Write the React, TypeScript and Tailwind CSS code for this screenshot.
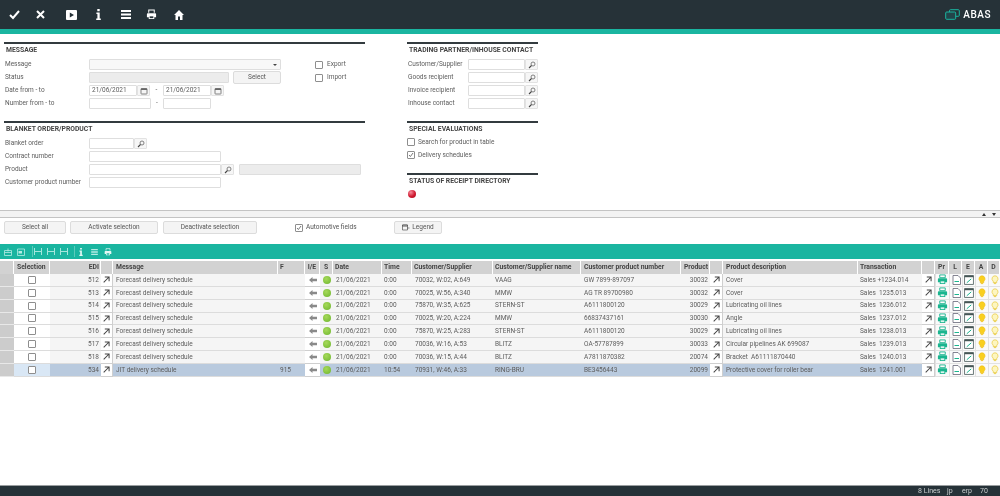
import React from "react";

const rows = [
  ["512", "Forecast delivery schedule", "", "21/06/2021", "0:00", "70032, W:02, A:649", "VAAG", "GW 7899-897097", "30032", "Cover", "Sales +1234.014"],
  ["513", "Forecast delivery schedule", "", "21/06/2021", "0:00", "70025, W:56, A:340", "MMW", "AG TR 89700980", "30032", "Cover", "Sales  1235.013"],
  ["514", "Forecast delivery schedule", "", "21/06/2021", "0:00", "75870, W:35, A:625", "STERN-ST", "A6111800120", "30029", "Lubricating oil lines", "Sales  1236.012"],
  ["515", "Forecast delivery schedule", "", "21/06/2021", "0:00", "70025, W:20, A:224", "MMW", "66837437161", "30030", "Angle", "Sales  1237.012"],
  ["516", "Forecast delivery schedule", "", "21/06/2021", "0:00", "75870, W:25, A:283", "STERN-ST", "A6111800120", "30029", "Lubricating oil lines", "Sales  1238.013"],
  ["517", "Forecast delivery schedule", "", "21/06/2021", "0:00", "70036, W:16, A:53", "BLITZ", "OA-57787899", "30033", "Circular pipelines AK 699087", "Sales  1239.013"],
  ["518", "Forecast delivery schedule", "", "21/06/2021", "0:00", "70036, W:15, A:44", "BLITZ", "A7811870382", "20074", "Bracket  A61111870440", "Sales  1240.013"],
  ["534", "JIT delivery schedule", "915", "21/06/2021", "10:54", "70931, W:46, A:33", "RING-BRU", "BE3456443", "20099", "Protective cover for roller bear", "Sales  1241.001"],
];

const gridCols =
  "grid grid-cols-[14px_36px_51px_12px_165px_27px_15px_13px_49px_30px_81px_88px_100px_29px_13px_135px_64px_13px_14px_13px_13px_13px_12px]";

function Lookup() {
  return (
    <button className="w-[13px] h-[11px] shrink-0 border border-[#e2e2e2] rounded-[1px] bg-[#f6f6f6] flex items-center justify-center">
      <svg width="8" height="8" viewBox="0 0 8 8">
        <circle cx="5" cy="3" r="2" fill="none" stroke="#666" strokeWidth="0.8" />
        <path d="M3.5 4.5 1 7" stroke="#444" strokeWidth="1.1" />
      </svg>
    </button>
  );
}

function Cal() {
  return (
    <button className="w-[13px] h-[11px] shrink-0 border border-[#e2e2e2] rounded-[1px] bg-[#f6f6f6] flex items-center justify-center">
      <svg width="8" height="8" viewBox="0 0 8 8">
        <rect x="1" y="1.5" width="6" height="5.5" rx="0.5" fill="none" stroke="#666" strokeWidth="0.8" />
        <rect x="1" y="1.5" width="6" height="1.5" fill="#666" />
      </svg>
    </button>
  );
}

function Input({ w, value, grey }: { w: string; value?: string; grey?: boolean }) {
  return (
    <div className={`${w} h-[11px] shrink-0 border border-[#dedede] rounded-[1px] ${grey ? "bg-[#ececec]" : "bg-white"} flex items-center pl-[2px] text-[#5c5c5c]`}>
      {value}
    </div>
  );
}

function Check({ on, cls }: { on?: boolean; cls?: string }) {
  return (
    <span className={`w-[8px] h-[8px] shrink-0 border border-[#8e8e8e] rounded-[1px] bg-white flex items-center justify-center ${cls ?? ""}`}>
      {on && (
        <svg width="6" height="6" viewBox="0 0 6 6">
          <path d="M1 3l1.4 1.5L5 1" fill="none" stroke="#555" strokeWidth="0.8" />
        </svg>
      )}
    </span>
  );
}

function Heading({ children }: { children: React.ReactNode }) {
  return (
    <div className="border-t-2 border-[#333b3f] h-[15px] pl-[2px] flex items-center font-bold text-[#444] text-[6.8px] whitespace-nowrap">
      {children}
    </div>
  );
}

function Row({ label, children }: { label: string; children?: React.ReactNode }) {
  return (
    <div className="flex items-center h-[13px]">
      <span className="w-[85px] shrink-0 pl-[1px] whitespace-nowrap">{label}</span>
      {children}
    </div>
  );
}

function Btn({ w, children }: { w: string; children: React.ReactNode }) {
  return (
    <button className={`${w} h-[13px] shrink-0 border border-[#dcdcdc] rounded-[2px] bg-[#f4f4f4] text-[#555] flex items-center justify-center gap-[2px]`}>
      {children}
    </button>
  );
}

function ArrowCell() {
  return (
    <div className="bg-white border-r border-b border-[#cfcfcf] flex items-center justify-center">
      <svg width="9" height="9" viewBox="0 0 8 8">
        <path d="M1.5 6.5 6 2M2.5 1.7H6.3V5.5" fill="none" stroke="#444" strokeWidth="0.9" />
      </svg>
    </div>
  );
}

function IconCell({ children }: { children: React.ReactNode }) {
  return <div className="bg-[#fafafa] border-l border-b border-[#e2e2e2] flex items-center justify-center">{children}</div>;
}

const TopPrinter = ({ fill, size = 11 }: { fill: string; size?: number }) => (
  <svg width={size} height={size} viewBox="0 0 12 12">
    <path d="M3 1h6v3H3z" fill="none" stroke={fill} strokeWidth="1" />
    <path d="M1 5.5a1 1 0 0 1 1-1h8a1 1 0 0 1 1 1V9H9v2H3V9H1z" fill={fill} />
    <path d="M4 8h4v2H4z" fill="#fff" opacity="0.85" />
  </svg>
);

const Bulb = ({ fill, stroke }: { fill: string; stroke: string }) => (
  <svg width="8" height="10" viewBox="0 0 8 10">
    <path d="M4 .8a3 3 0 0 1 1.8 5.4V7.5H2.2V6.2A3 3 0 0 1 4 .8z" fill={fill} stroke={stroke} strokeWidth="0.7" />
    <path d="M2.8 8.6h2.4" stroke={stroke} strokeWidth="0.9" />
  </svg>
);

export default function App() {
  return (
    <div className="w-[1000px] h-[496px] overflow-hidden bg-white flex flex-col text-[6.5px] leading-none font-['Roboto',sans-serif] text-[#5c5c5c] blur-[0.3px]">
      {/* top bar */}
      <header className="h-[29px] shrink-0 bg-[#263238] flex items-center justify-between pl-[9px] pr-[9px]">
        <div className="flex items-center text-white">
          <svg className="mr-[16px]" width="11" height="11" viewBox="0 0 11 11"><path d="M1 6l3 3 6-7" fill="none" stroke="#fff" strokeWidth="2" /></svg>
          <svg className="mr-[21px]" width="9" height="9" viewBox="0 0 9 9"><path d="M1 1l7 7M8 1 1 8" stroke="#fff" strokeWidth="2" /></svg>
          <svg className="mr-[19px]" width="11" height="10" viewBox="0 0 11 10"><path fillRule="evenodd" d="M1 0h9a1 1 0 0 1 1 1v8a1 1 0 0 1-1 1H1a1 1 0 0 1-1-1V1a1 1 0 0 1 1-1zM3.8 2.4v5.2L8 5z" fill="#fff" /></svg>
          <svg className="mr-[20px]" width="5" height="11" viewBox="0 0 5 11"><path d="M1.3 0h2.4v2.2H1.3zM.4 3.6h3.3V9.4H4.8V11H.2V9.4h1.2V5.1H.4z" fill="#fff" /></svg>
          <svg className="mr-[15px]" width="10" height="9" viewBox="0 0 10 9"><path d="M0 0h10v2H0zM0 3.5h10v2H0zM0 7h10v2H0z" fill="#fff" /></svg>
          <svg className="mr-[17px]" width="11" height="11" viewBox="0 0 12 12"><path d="M3 4V1h6v3" fill="none" stroke="#fff" strokeWidth="1.1" /><path d="M1 5.5a1 1 0 0 1 1-1h8a1 1 0 0 1 1 1V9H9v2H3V9H1z" fill="#fff" /><path d="M4 8h4v2H4z" fill="#263238" /></svg>
          <svg width="10" height="10" viewBox="0 0 10 10"><path d="M5 0 10 5H8.5v5H6V6.5H4V10H1.5V5H0z" fill="#fff" /></svg>
        </div>
        <div className="flex items-center gap-[3px]">
          <svg width="15" height="11" viewBox="0 0 15 11">
            <rect x="4.5" y="0.7" width="9.8" height="6.6" rx="1" fill="none" stroke="#1ab5a0" strokeWidth="1" />
            <rect x="0.7" y="3" width="10" height="7.3" rx="1" fill="#22454a" stroke="#1ab5a0" strokeWidth="1" />
          </svg>
          <span className="font-medium text-[10px] tracking-[0.5px] text-white">ABAS</span>
        </div>
      </header>
      <div className="h-[5px] shrink-0 bg-[#1ab5a0]" />

      {/* form */}
      <section className="h-[176px] shrink-0 flex items-start pt-[8px]">
        <div className="ml-[4px] w-[361px] shrink-0">
          <Heading>MESSAGE</Heading>
          <div className="flex pt-[1px]">
            <div>
              <Row label="Message">
                <div className="w-[192px] h-[11px] border border-[#dedede] rounded-[1px] bg-[#f8f8f8] flex items-center justify-end pr-[3px]">
                  <span className="border-x-[2px] border-t-[2px] border-x-transparent border-t-[#444]" />
                </div>
              </Row>
              <Row label="Status">
                <Input w="w-[140px]" grey />
                <Btn w="w-[48px] ml-[4px]">Select</Btn>
              </Row>
              <Row label="Date from - to">
                <Input w="w-[48px]" value="21/06/2021" />
                <Cal />
                <span className="w-[13px] text-center">-</span>
                <Input w="w-[48px]" value="21/06/2021" />
                <Cal />
              </Row>
              <Row label="Number from - to">
                <Input w="w-[62px]" />
                <span className="w-[12px] text-center">-</span>
                <Input w="w-[48px]" />
              </Row>
            </div>
            <div className="ml-[34px]">
              <div className="flex items-center h-[13px] gap-[4px]"><Check />Export</div>
              <div className="flex items-center h-[13px] gap-[4px]"><Check />Import</div>
            </div>
          </div>

          <div className="h-[11px]" />
          <Heading>BLANKET ORDER/PRODUCT</Heading>
          <div className="pt-[1px]">
            <Row label="Blanket order"><Input w="w-[45px]" /><Lookup /></Row>
            <Row label="Contract number"><Input w="w-[132px]" /></Row>
            <Row label="Product">
              <Input w="w-[132px]" /><Lookup /><Input w="w-[122px] ml-[5px]" grey />
            </Row>
            <Row label="Customer product number"><Input w="w-[132px]" /></Row>
          </div>
        </div>

        <div className="ml-[42px] w-[131px] shrink-0">
          <Heading>TRADING PARTNER/INHOUSE CONTACT</Heading>
          <div className="pt-[1px]">
            {["Customer/Supplier", "Goods recipient", "Invoice recipient", "Inhouse contact"].map((l) => (
              <div key={l} className="flex items-center h-[13px]">
                <span className="w-[61px] shrink-0 pl-[1px] whitespace-nowrap">{l}</span>
                <Input w="w-[57px]" />
                <Lookup />
              </div>
            ))}
          </div>
          <div className="h-[10.5px]" />
          <Heading>SPECIAL EVALUATIONS</Heading>
          <div className="flex flex-col">
            <div className="flex items-center h-[13px] gap-[3px]"><Check />Search for product in table</div>
            <div className="flex items-center h-[13px] gap-[3px]"><Check on />Delivery schedules</div>
          </div>
          <div className="h-[11.5px]" />
          <Heading>STATUS OF RECEIPT DIRECTORY</Heading>
          <div className="mt-[2px] ml-[1px] w-[8px] h-[8px] rounded-full bg-[radial-gradient(circle_at_35%_30%,#f58a9a,#d01a30_55%,#a81020)]" />
        </div>
      </section>

      {/* splitter */}
      <div className="h-[8px] shrink-0 bg-[#f3f3f3] border-y border-[#c4c4c4] flex items-center justify-end gap-[6px] pr-[4px]">
        <span className="border-x-[2.5px] border-b-[3px] border-x-transparent border-b-[#333]" />
        <span className="border-x-[2.5px] border-t-[3px] border-x-transparent border-t-[#333]" />
      </div>

      {/* action buttons */}
      <div className="h-[26px] shrink-0 flex items-center pl-[4px] pb-[7px] text-[#555]">
        <Btn w="w-[62px]">Select all</Btn>
        <Btn w="w-[88px] ml-[4px]">Activate selection</Btn>
        <Btn w="w-[94px] ml-[5px]">Deactivate selection</Btn>
        <Check on cls="ml-[38px]" />
        <span className="ml-[3px] w-[86px]">Automotive fields</span>
        <Btn w="w-[48px] ml-[2px]">
          <svg width="8" height="7" viewBox="0 0 8 7"><path d="M.5 1h5v5h-5zM.5 1h5v1.2h-5z" fill="none" stroke="#555" strokeWidth="0.7" /><path d="M5 4h2.5" stroke="#555" strokeWidth="0.7" /></svg>
          Legend
        </Btn>
      </div>

      {/* teal toolbar */}
      <div className="h-[15px] shrink-0 bg-[#1ab5a0] flex items-center pl-[4px] text-[#b5ebe3]">
        <svg className="mr-[5px]" width="8" height="8" viewBox="0 0 8 8"><path d="M.5 2.5h7v5h-7zM.5 4.5h7M4 .5v3" fill="none" stroke="currentColor" strokeWidth="0.8" /></svg>
        <svg className="mr-[7px]" width="8" height="8" viewBox="0 0 8 8"><path d="M.5 1h7v6.5h-7z" fill="none" stroke="currentColor" strokeWidth="0.8" /><path d="M1.5 3h3.5v2.5H1.5z" fill="currentColor" /></svg>
        <span className="w-px h-[11px] bg-[#5ccabb] mr-[1px]" />
        <svg className="mr-[5px]" width="8" height="7" viewBox="0 0 8 7"><path d="M.5 0v7M7.5 0v7M1 3.5h6" stroke="currentColor" strokeWidth="0.9" /></svg>
        <svg className="mr-[5px]" width="8" height="7" viewBox="0 0 8 7"><path d="M.5 0v7M7.5 0v7M1 3.5h6" stroke="currentColor" strokeWidth="0.9" /></svg>
        <svg className="mr-[6px]" width="8" height="7" viewBox="0 0 8 7"><path d="M.5 0v7M7.5 0v7M1 3.5h6" stroke="currentColor" strokeWidth="0.9" /></svg>
        <span className="w-px h-[11px] bg-[#5ccabb] mr-[4px]" />
        <svg className="mr-[8px]" width="4" height="8" viewBox="0 0 5 11"><path d="M1.3 0h2.4v2.2H1.3zM.4 3.6h3.3V9.4H4.8V11H.2V9.4h1.2V5.1H.4z" fill="#e4f7f4" /></svg>
        <svg className="mr-[6px]" width="7" height="6" viewBox="0 0 10 9"><path d="M0 0h10v2H0zM0 3.5h10v2H0zM0 7h10v2H0z" fill="currentColor" /></svg>
        <svg width="8" height="8" viewBox="0 0 12 12"><path d="M3 4V1h6v3" fill="none" stroke="#e4f7f4" strokeWidth="1.1" /><path d="M1 5.5a1 1 0 0 1 1-1h8a1 1 0 0 1 1 1V9H9v2H3V9H1z" fill="#e4f7f4" /><path d="M4 8h4v2H4z" fill="#1ab5a0" /></svg>
      </div>

      {/* table */}
      <div className="flex-1 min-h-0 pt-[2px]">
        <div className={`${gridCols} h-[13px] bg-white gap-x-0 font-bold text-[#444] text-[6.8px]`}>
          {[
            ["", ""], ["Selection", "pl-[3px]"], ["EDI", "justify-end pr-[1px]"], ["", ""], ["Message", "pl-[3px]"], ["F", "pl-[2px]"],
            ["I/E", "justify-center"], ["S", "justify-center"], ["Date", "pl-[2px]"], ["Time", "pl-[2px]"], ["Customer/Supplier", "pl-[2px]"],
            ["Customer/Supplier name", "pl-[2px]"], ["Customer product number", "pl-[3px]"], ["Product", "justify-end pr-[1px]"], ["", ""],
            ["Product description", "pl-[3px]"], ["Transaction", "pl-[2px]"], ["", ""], ["Pr", "justify-center"], ["L", "justify-center"],
            ["E", "justify-center"], ["A", "justify-center"], ["D", "justify-center"],
          ].map(([t, c], i) => (
            <div key={i} className={`bg-[#d2d2d2] border-r border-white flex items-center whitespace-nowrap overflow-hidden ${c}`}>{t}</div>
          ))}
        </div>
        {rows.map((r, idx) => {
          const sel = idx === rows.length - 1;
          const cell = `${sel ? "bg-[#b9cade]" : "bg-[#f5f5f5]"} border-b border-[#dcdcdc] flex items-center whitespace-pre overflow-hidden`;
          return (
            <div key={r[0]} className={`${gridCols} h-[12.85px]`}>
              <div className="bg-[#cccccc] border-b border-[#e8e8e8]" />
              <div className={`${sel ? "bg-[#d9e7f5]" : "bg-white"} border-b border-[#dcdcdc] flex items-center justify-center`}><Check /></div>
              <div className={`${cell} justify-end pr-[2px]`}>{r[0]}</div>
              <ArrowCell />
              <div className={`${cell} pl-[3px]`}>{r[1]}</div>
              <div className={`${cell} pl-[2px]`}>{r[2]}</div>
              <div className="bg-white border-b border-[#cfcfcf] flex items-center justify-center">
                <svg width="8" height="6" viewBox="0 0 8 6"><path d="M0 3 3.5 0v1.8H8v2.4H3.5V6z" fill="#8a8a8a" /></svg>
              </div>
              <div className={`${cell} justify-center`}>
                <span className="w-[8px] h-[8px] rounded-full bg-[radial-gradient(circle_at_40%_35%,#a6d95a,#6cb52c)]" />
              </div>
              <div className={`${cell} pl-[3px]`}>{r[3]}</div>
              <div className={`${cell} pl-[2px]`}>{r[4]}</div>
              <div className={`${cell} pl-[3px]`}>{r[5]}</div>
              <div className={`${cell} pl-[2px]`}>{r[6]}</div>
              <div className={`${cell} pl-[3px]`}>{r[7]}</div>
              <div className={`${cell} justify-end pr-[2px]`}>{r[8]}</div>
              <ArrowCell />
              <div className={`${cell} pl-[3px]`}>{r[9]}</div>
              <div className={`${cell} pl-[2px]`}>{r[10]}</div>
              <ArrowCell />
              <IconCell><TopPrinter fill="#1ab58f" size={11} /></IconCell>
              <IconCell>
                <svg width="9" height="10" viewBox="0 0 9 10"><path d="M1 .5h5L8.500 3v6.500H1z" fill="#fff" stroke="#667" strokeWidth="0.8" /><path d="M2.500 6.500h4.500" stroke="#1ab58f" strokeWidth="1" /></svg>
              </IconCell>
              <IconCell>
                <svg width="10" height="10" viewBox="0 0 9 9"><path d="M.5.5h8v8h-8z" fill="#fff" stroke="#455" strokeWidth="0.7" /><path d="M.5.5h8v1.500h-8z" fill="#455" /><path d="M2.500 7 6.500 3.500" stroke="#1ab58f" strokeWidth="0.9" /></svg>
              </IconCell>
              <IconCell><Bulb fill="#f9cf1e" stroke="#f0c010" /></IconCell>
              <IconCell><Bulb fill="#fdf6c0" stroke="#e8c93a" /></IconCell>
            </div>
          );
        })}
      </div>

      {/* status bar */}
      <footer className="h-[11px] shrink-0 bg-[#263238] border-t border-[#9a9ea0] flex items-center text-[#c8cccd] text-[7px] pl-[918px]">
        <span className="w-[29px]">8 Lines</span>
        <span className="w-[15px]">jp</span>
        <span className="w-[18px]">erp</span>
        <span>70</span>
      </footer>
    </div>
  );
}
